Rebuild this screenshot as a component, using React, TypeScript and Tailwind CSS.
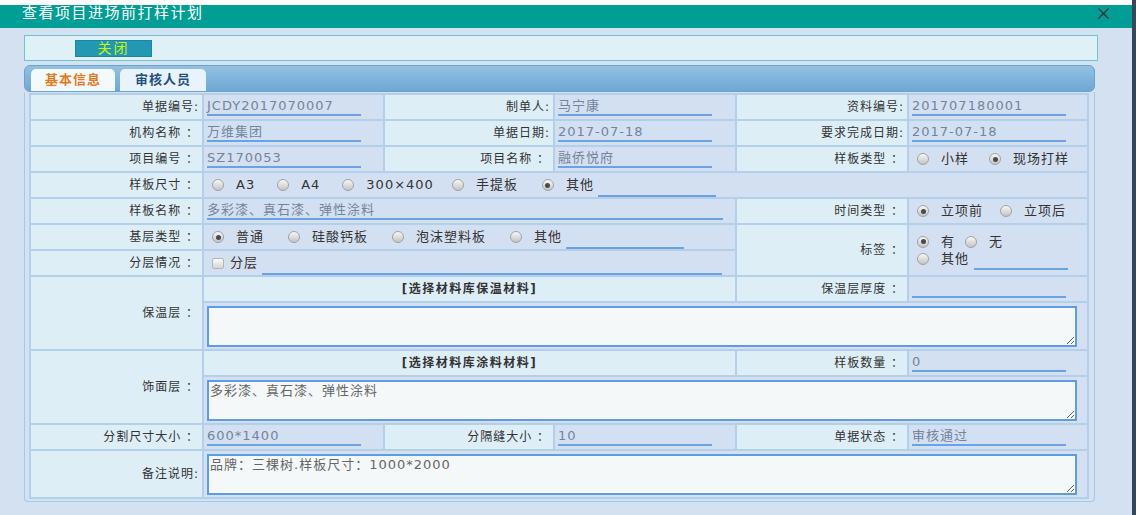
import React from 'react';
import { X } from 'lucide-react';

const font = { fontFamily: '"DejaVu Sans", "Noto Sans CJK SC", sans-serif' };

const Radio = ({ checked = false }: { checked?: boolean }) => (
    <span className="inline-flex items-center justify-center w-[12px] h-[12px] rounded-full border border-[#a2a2a2] bg-gradient-to-b from-[#f8f8f8] to-[#c4c4c4] shrink-0">
        {checked && <span className="w-[5px] h-[5px] rounded-full bg-[#4a4a4a]" />}
    </span>
);

const Opt = ({ label, checked = false, gap = 'mr-[22px]' }: { label: string; checked?: boolean; gap?: string }) => (
    <span className={`inline-flex items-center ${gap}`}>
        <Radio checked={checked} />
        <span className="ml-[12px] text-[#333]">{label}</span>
    </span>
);

const Label = ({ text, className = '' }: { text: string; className?: string }) => (
    <div className={`bg-[#ddeef7] flex items-center justify-end pr-[3px] text-[#333] text-[12px] tracking-[1px] ${className}`}>{text}</div>
);

const Field = ({ value, width = 'w-[154px]' }: { value?: string; width?: string }) => (
    <div className="bg-[#d3e0f2] flex items-start pl-[3px]">
        <div className={`${width} h-[20px] mt-[1px] leading-[19px] border-b-2 border-[#6aa2e6] text-[#74849a] whitespace-nowrap`}>{value}</div>
    </div>
);

const Area = ({ value = '' }: { value?: string }) => (
    <div className="col-span-5 bg-[#d3e0f2] pl-[3px] pt-[3px]">
        <textarea
            readOnly
            value={value}
            className="block w-[870px] h-[41px] bg-[#f4f8f8] border-2 border-[#5e9ce6] px-[1px] py-0 text-[13px] leading-[18px] tracking-[1px] text-[#666] outline-none"
            style={font}
        />
    </div>
);

const Line = ({ className }: { className: string }) => <div className={`border-b-2 border-[#6aa2e6] ${className}`} />;

export default function App() {
    return (
        <div className="w-[1136px] h-[515px] flex overflow-hidden text-[13px] tracking-[1px]" style={font}>
            <div className="w-[1132px] h-full flex flex-col bg-[#d3e1f1]">
                <div className="h-[5px] bg-white shrink-0" />
                <div className="h-[23px] bg-[#009e94] flex items-start justify-between pl-[22px] pr-[19px] shrink-0">
                    <span className="text-white text-[15px] tracking-[1.5px] leading-[17px]">查看项目进场前打样计划</span>
                    <X size={19} strokeWidth={1.5} className="text-[#2b2b2b] -mt-[1px]" />
                </div>

                {/* toolbar */}
                <div className="ml-[24px] mt-[7px] w-[1074px] h-[26px] bg-[#dff0f6] border border-[#72c2cf] flex items-center pl-[50px]">
                    <div className="w-[77px] h-[17px] bg-[#2298b5] border border-[#1b86a3] text-[#c8f500] text-[14px] tracking-[2px] leading-[15px] text-center">关闭</div>
                </div>

                {/* tab panel */}
                <div className="ml-[24px] mt-[4px] w-[1071px] flex flex-col">
                    <div className="h-[27px] rounded-[6px] bg-gradient-to-b from-[#93c1e2] to-[#6fa7d4] border border-[#6aa3d2] flex items-end pl-[6px] gap-[5px]">
                        <div className="w-[84px] h-[22px] rounded-t-[5px] bg-[#f3fafd] text-[#e8781a] font-bold flex items-center justify-center">基本信息</div>
                        <div className="w-[86px] h-[22px] rounded-t-[5px] bg-[#e9f3fb] text-[#24507e] font-bold flex items-center justify-center">审核人员</div>
                    </div>
                    <div className="border-x border-b border-[#a8c8e6] rounded-b-[4px] pl-[4px] pr-[5px] pt-[1px] pb-[2px]">
                        <div className="grid grid-cols-[171px_179px_168px_180px_170px_178px] grid-rows-[24px_24px_24px_24px_24px_24px_24px_24px_46px_24px_46px_24px_46px] gap-[2px] p-[2px] bg-[#b3cfea]">
                            <Label text="单据编号:" />
                            <Field value="JCDY2017070007" />
                            <Label text="制单人:" />
                            <Field value="马宁康" />
                            <Label text="资料编号:" />
                            <Field value="201707180001" />

                            <Label text="机构名称 ：" />
                            <Field value="万维集团" />
                            <Label text="单据日期:" />
                            <Field value="2017-07-18" />
                            <Label text="要求完成日期:" />
                            <Field value="2017-07-18" />

                            <Label text="项目编号 ：" />
                            <Field value="SZ170053" />
                            <Label text="项目名称 ：" />
                            <Field value="融侨悦府" />
                            <Label text="样板类型 ：" />
                            <div className="bg-[#d3e0f2] flex items-center pl-[8px]">
                                <Opt label="小样" gap="mr-[20px]" />
                                <Opt label="现场打样" checked gap="" />
                            </div>

                            <Label text="样板尺寸 ：" />
                            <div className="col-span-5 bg-[#d3e0f2] flex items-center pl-[8px]">
                                <Opt label="A3" />
                                <Opt label="A4" />
                                <Opt label="300×400" gap="mr-[18px]" />
                                <Opt label="手提板" gap="mr-[24px]" />
                                <Opt label="其他" checked gap="mr-[4px]" />
                                <Line className="w-[118px] h-[18px] mt-[6px]" />
                            </div>

                            <Label text="样板名称 ：" />
                            <div className="col-span-3 bg-[#d3e0f2] flex items-start pl-[3px]">
                                <div className="w-[516px] h-[20px] mt-[1px] leading-[19px] border-b-2 border-[#6aa2e6] text-[#74849a]">多彩漆、真石漆、弹性涂料</div>
                            </div>
                            <Label text="时间类型 ：" />
                            <div className="bg-[#d3e0f2] flex items-center pl-[8px]">
                                <Opt label="立项前" checked gap="mr-[17px]" />
                                <Opt label="立项后" gap="" />
                            </div>

                            <Label text="基层类型 ：" />
                            <div className="col-span-3 bg-[#d3e0f2] flex items-center pl-[8px]">
                                <Opt label="普通" checked gap="mr-[24px]" />
                                <Opt label="硅酸钙板" gap="mr-[24px]" />
                                <Opt label="泡沫塑料板" gap="mr-[24px]" />
                                <Opt label="其他" gap="mr-[4px]" />
                                <Line className="w-[118px] h-[18px] mt-[6px]" />
                            </div>
                            <Label text="标签 ：" className="row-span-2" />
                            <div className="row-span-2 bg-[#d3e0f2] flex flex-col justify-center pl-[8px] gap-[1px]">
                                <div className="flex items-center h-[16px]">
                                    <Opt label="有" checked gap="mr-[10px]" />
                                    <Opt label="无" gap="" />
                                </div>
                                <div className="flex items-center h-[16px]">
                                    <Opt label="其他" gap="mr-[5px]" />
                                    <Line className="w-[94px] h-[14px] mt-[8px]" />
                                </div>
                            </div>

                            <Label text="分层情况 ：" />
                            <div className="col-span-3 bg-[#d3e0f2] flex items-center pl-[8px]">
                                <span className="w-[12px] h-[11px] border border-[#b5b5b5] bg-gradient-to-b from-[#fafafa] to-[#d6d6d6] rounded-[2px]" />
                                <span className="ml-[6px] text-[#333]">分层</span>
                                <Line className="ml-[4px] w-[460px] h-[18px] mt-[6px]" />
                            </div>

                            <Label text="保温层 ：" className="row-span-2" />
                            <div className="col-span-3 bg-[#ddeef7] flex items-center justify-center font-bold text-[#333] text-[12px] tracking-[1.5px]">[选择材料库保温材料]</div>
                            <Label text="保温层厚度 ：" />
                            <Field />
                            <Area />

                            <Label text="饰面层 ：" className="row-span-2" />
                            <div className="col-span-3 bg-[#ddeef7] flex items-center justify-center font-bold text-[#333] text-[12px] tracking-[1.5px]">[选择材料库涂料材料]</div>
                            <Label text="样板数量 ：" />
                            <Field value="0" />
                            <Area value="多彩漆、真石漆、弹性涂料" />

                            <Label text="分割尺寸大小 ：" />
                            <Field value="600*1400" />
                            <Label text="分隔缝大小 ：" />
                            <Field value="10" />
                            <Label text="单据状态 ：" />
                            <Field value="审核通过" />

                            <Label text="备注说明:" />
                            <Area value="品牌：三棵树.样板尺寸：1000*2000" />
                        </div>
                    </div>
                </div>
            </div>
            <div className="w-[4px] h-full bg-[#34495c]" />
        </div>
    );
}
